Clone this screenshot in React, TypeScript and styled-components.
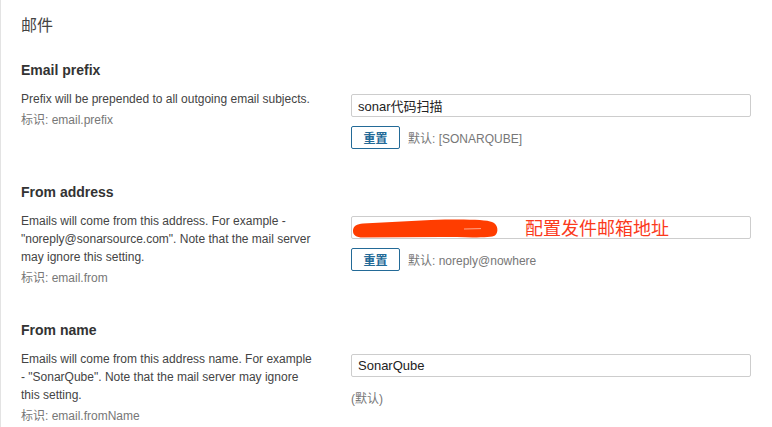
import React from "react";
import styled, { createGlobalStyle } from "styled-components";

const GlobalStyle = createGlobalStyle`
  html, body { margin: 0; padding: 0; background: #fff; }
  body {
    font-family: "Liberation Sans", Arial, "Noto Sans CJK SC", sans-serif;
    color: #444;
  }
`;

const Page = styled.div`
  width: 772px;
  height: 427px;
  box-sizing: border-box;
  border-left: 1px solid #e3e3e3;
  padding: 16px 0 0 20px;
  overflow: hidden;
`;

const Title = styled.h2`
  margin: 0 0 25px;
  font-size: 16px;
  line-height: 20px;
  font-weight: 400;
  color: #444;
  font-family: "Liberation Sans", "Noto Sans CJK SC", sans-serif;
`;

const Section = styled.section`
  padding-bottom: 34px;
`;

const Heading = styled.h3`
  margin: 0 0 11px;
  font-size: 14px;
  line-height: 18px;
  font-weight: 700;
  color: #333;
`;

const Row = styled.div`
  display: flex;
  align-items: flex-start;
`;

const Left = styled.div`
  width: 330px;
  box-sizing: border-box;
  padding-right: 34px;
  flex-shrink: 0;
`;

const Description = styled.div`
  font-size: 12px;
  line-height: 18px;
  color: #444;
`;

const Key = styled.div`
  margin-top: 3px;
  font-size: 12px;
  line-height: 18px;
  color: #777;
  font-family: "Liberation Sans", "Noto Sans CJK SC", sans-serif;
`;

const Right = styled.div`
  padding-top: 4px;
  width: 400px;
`;

const InputWrap = styled.div`
  position: relative;
  width: 400px;
`;

const Input = styled.input`
  display: block;
  width: 400px;
  height: 23px;
  box-sizing: border-box;
  border: 1px solid #cdcdcd;
  border-radius: 2px;
  padding: 0 6px;
  font-size: 13px;
  color: #222;
  font-family: "Liberation Sans", "Noto Sans CJK SC", sans-serif;
  background: #fff;
  outline: none;
`;

const Scribble = styled.svg`
  position: absolute;
  left: 0;
  top: 0;
  pointer-events: none;
`;

const Annotation = styled.span`
  position: absolute;
  left: 174px;
  top: 1px;
  font-size: 18px;
  line-height: 20px;
  color: #fb3a1c;
  font-family: "Noto Sans CJK SC", sans-serif;
  white-space: nowrap;
  pointer-events: none;
`;

const Changes = styled.div`
  display: flex;
  align-items: center;
  gap: 8px;
  margin-top: 9px;
  height: 23px;
`;

const ResetButton = styled.button`
  width: 49px;
  height: 23px;
  box-sizing: border-box;
  border: 1px solid #236a97;
  border-radius: 2px;
  background: #fff;
  color: #236a97;
  font-size: 12px;
  font-weight: 700;
  font-family: "Noto Sans CJK SC", sans-serif;
  padding: 0;
  cursor: pointer;
`;

const DefaultText = styled.span`
  font-size: 12px;
  color: #777;
  font-family: "Liberation Sans", "Noto Sans CJK SC", sans-serif;
`;

type Setting = {
  title: string;
  description: string;
  keyName: string;
  value: string;
  defaultText: string;
  resettable: boolean;
  annotated?: boolean;
};

const settings: Setting[] = [
  {
    title: "Email prefix",
    description: "Prefix will be prepended to all outgoing email subjects.",
    keyName: "email.prefix",
    value: "sonar代码扫描",
    defaultText: "默认: [SONARQUBE]",
    resettable: true,
  },
  {
    title: "From address",
    description:
      'Emails will come from this address. For example - "noreply@sonarsource.com". Note that the mail server may ignore this setting.',
    keyName: "email.from",
    value: "",
    defaultText: "默认: noreply@nowhere",
    resettable: true,
    annotated: true,
  },
  {
    title: "From name",
    description:
      'Emails will come from this address name. For example - "SonarQube". Note that the mail server may ignore this setting.',
    keyName: "email.fromName",
    value: "SonarQube",
    defaultText: "(默认)",
    resettable: false,
  },
];

const RedactionMark = () => (
  <Scribble width="160" height="24" viewBox="0 0 160 24">
    <path
      d="M2,15 C2,10 6,8 12,7.5 L80,4 C110,3 135,3.5 141,6 C147,8 148,16 144,19.5 C140,22 120,21.5 90,21 L12,21.5 C5,21.5 2,19 2,15 Z"
      fill="#ff3d00"
    />
    <path d="M113,13 L130,12.6" stroke="#ffffff" strokeOpacity="0.55" strokeWidth="1" />
  </Scribble>
);

export default function App() {
  return (
    <>
      <GlobalStyle />
      <Page>
        <Title>邮件</Title>
        {settings.map((s) => (
          <Section key={s.keyName}>
            <Heading>{s.title}</Heading>
            <Row>
              <Left>
                <Description>{s.description}</Description>
                <Key>标识: {s.keyName}</Key>
              </Left>
              <Right>
                <InputWrap>
                  <Input defaultValue={s.value} readOnly />
                  {s.annotated && (
                    <>
                      <RedactionMark />
                      <Annotation>配置发件邮箱地址</Annotation>
                    </>
                  )}
                </InputWrap>
                <Changes>
                  {s.resettable && <ResetButton>重置</ResetButton>}
                  <DefaultText>{s.defaultText}</DefaultText>
                </Changes>
              </Right>
            </Row>
          </Section>
        ))}
      </Page>
    </>
  );
}
